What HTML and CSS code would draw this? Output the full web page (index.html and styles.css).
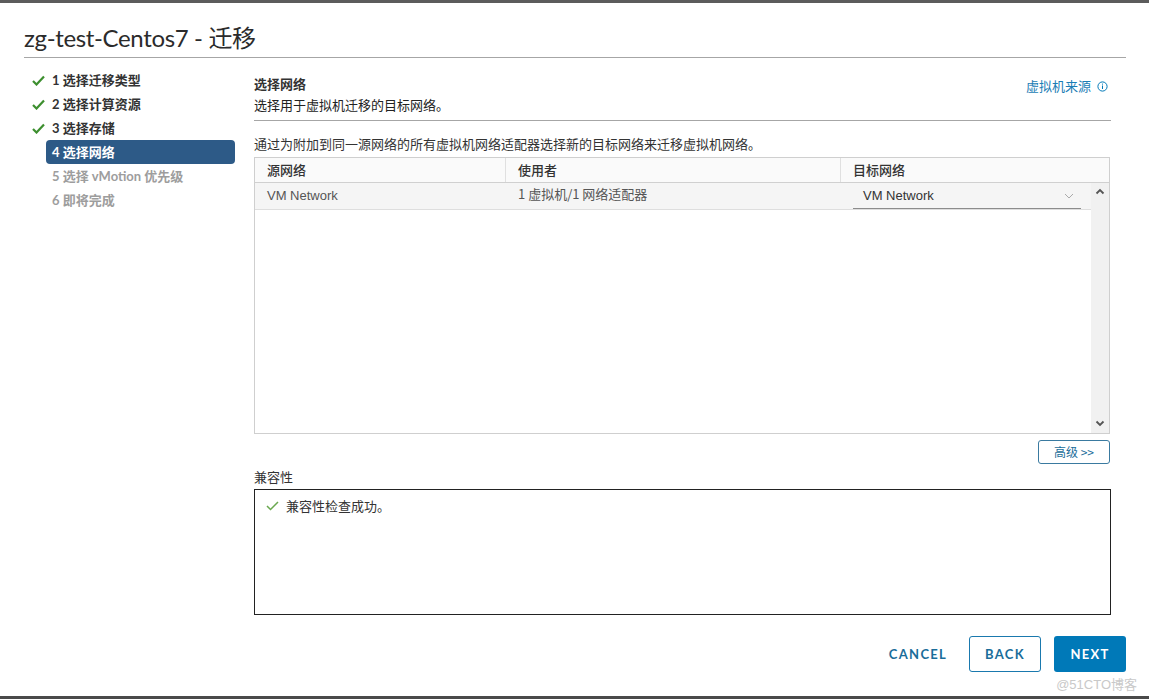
FILE: index.html
```html
<!DOCTYPE html>
<html lang="zh">
<head>
<meta charset="utf-8">
<link rel="stylesheet" href="styles.css">
</head>
<body>
<div class="dialog">
  <div class="topbar"></div>
  <div class="header">
    <h1 class="title">zg-test-Centos7 - 迁移</h1>
  </div>
  <div class="main">
    <nav class="steps">
      <div class="step done"><span class="chk"><svg width="13" height="11" viewBox="0 0 13 11"><path d="M1 6 L4.5 9.5 L12 1.5" fill="none" stroke="#3d8f2f" stroke-width="2.2"/></svg></span>1 选择迁移类型</div>
      <div class="step done"><span class="chk"><svg width="13" height="11" viewBox="0 0 13 11"><path d="M1 6 L4.5 9.5 L12 1.5" fill="none" stroke="#3d8f2f" stroke-width="2.2"/></svg></span>2 选择计算资源</div>
      <div class="step done"><span class="chk"><svg width="13" height="11" viewBox="0 0 13 11"><path d="M1 6 L4.5 9.5 L12 1.5" fill="none" stroke="#3d8f2f" stroke-width="2.2"/></svg></span>3 选择存储</div>
      <div class="step active">4 选择网络</div>
      <div class="step disabled">5 选择 vMotion 优先级</div>
      <div class="step disabled">6 即将完成</div>
    </nav>
    <section class="content">
      <div class="sec-head">
        <div class="sec-text">
          <div class="sec-title">选择网络</div>
          <div class="sec-sub">选择用于虚拟机迁移的目标网络。</div>
        </div>
        <a class="src-link">虚拟机来源 <svg class="info" width="11" height="11" viewBox="0 0 11 11"><circle cx="5.5" cy="5.5" r="4.6" fill="none" stroke="#0079b8" stroke-width="1"/><rect x="5" y="4.5" width="1" height="3.5" fill="#0079b8"/><rect x="5" y="2.6" width="1" height="1" fill="#0079b8"/></svg></a>
      </div>
      <p class="desc">通过为附加到同一源网络的所有虚拟机网络适配器选择新的目标网络来迁移虚拟机网络。</p>
      <div class="grid">
        <div class="grid-head">
          <div class="c c1">源网络</div>
          <div class="c c2">使用者</div>
          <div class="c c3">目标网络</div>
        </div>
        <div class="grid-body">
          <div class="rows">
            <div class="row">
              <div class="c c1">VM Network</div>
              <div class="c c2">1 虚拟机/1 网络适配器</div>
              <div class="c3s">
                <div class="select">VM Network<svg class="chev" width="10" height="6" viewBox="0 0 10 6"><path d="M1 1 L5 5 L9 1" fill="none" stroke="#aaa" stroke-width="1"/></svg></div>
              </div>
            </div>
          </div>
          <div class="scroll">
            <svg width="10" height="7" viewBox="0 0 10 7"><path d="M1.5 5.5 L5 2 L8.5 5.5" fill="none" stroke="#555" stroke-width="1.8"/></svg>
            <svg width="10" height="7" viewBox="0 0 10 7"><path d="M1.5 1.5 L5 5 L8.5 1.5" fill="none" stroke="#555" stroke-width="1.8"/></svg>
          </div>
        </div>
      </div>
      <div class="adv-wrap"><button class="adv">高级 &gt;&gt;</button></div>
      <div class="compat-label">兼容性</div>
      <div class="compat-box">
        <div class="compat-ok"><svg width="13" height="10" viewBox="0 0 13 10"><path d="M1 5 L4.5 8.5 L12 1" fill="none" stroke="#6aa84f" stroke-width="1.5"/></svg>兼容性检查成功。</div>
      </div>
    </section>
  </div>
  <div class="footer">
    <button class="btn flat">CANCEL</button>
    <button class="btn outline">BACK</button>
    <button class="btn primary">NEXT</button>
  </div>
  <div class="bottombar"></div>
  <div class="watermark">@51CTO博客</div>
</div>
</body>
</html>
```
FILE: styles.css
```css
* { box-sizing: border-box; }
html, body { margin: 0; padding: 0; }
body {
  width: 1149px;
  height: 699px;
  overflow: hidden;
  background: #fff;
  font-family: "Noto Sans CJK SC", "Liberation Sans", sans-serif;
  color: #333;
}
.dialog {
  position: relative;
  width: 1149px;
  height: 699px;
  display: flex;
  flex-direction: column;
}
.topbar { height: 3px; background: #5c5c5c; flex: none; }
.bottombar { height: 3px; background: #4a4a4a; flex: none; margin-top: auto; }
.header {
  margin: 0 23px 0 24px;
  height: 55px;
  border-bottom: 1px solid #a6a6a6;
  display: flex;
  align-items: flex-end;
}
.title {
  margin: 0 0 4px 0;
  font-family: "Lato", "Noto Sans CJK SC", sans-serif;
  font-weight: 400;
  font-size: 24px;
  line-height: 30px;
  color: #2b2b2b;
  letter-spacing: -0.35px;
}
.main {
  display: flex;
  margin-left: 24px;
  height: 556px;
}
.steps {
  width: 230px;
  padding: 10px 0 0 22px;
  flex: none;
}
.step {
  width: 189px;
  height: 24px;
  line-height: 24px;
  padding-left: 6px;
  font-family: "Lato", "Noto Sans CJK SC", sans-serif;
  font-weight: 700;
  font-size: 13px;
  color: #333;
  border-radius: 4px;
  display: flex;
  align-items: center;
}
.chk {
  flex: none;
  width: 14px;
  margin-left: -20px;
  margin-right: 6px;
  display: flex;
  align-items: center;
}
.step.active { background: #2d5a87; color: #fff; }
.step.disabled { color: #9d9d9d; }
.content {
  width: 857px;
  flex: none;
  padding-top: 15px;
}
.sec-head {
  display: flex;
  justify-content: space-between;
  align-items: flex-start;
  border-bottom: 1px solid #a6a6a6;
  height: 48px;
}
.sec-title { font-size: 13px; font-weight: 700; line-height: 21px; color: #333; }
.sec-sub { font-size: 13px; line-height: 21px; color: #222; }
.src-link {
  font-size: 13px;
  line-height: 20px;
  margin-top: 3px;
  margin-right: 3px;
  color: #1a7db5;
  display: flex;
  align-items: center;
  gap: 4px;
}
.info { margin-left: 2px; }
.desc {
  margin: 13px 0 3px 0;
  font-size: 13px;
  line-height: 20px;
  color: #333;
}
.grid {
  border: 1px solid #cfcfcf;
  width: 856px;
  height: 277px;
  display: flex;
  flex-direction: column;
}
.grid-head {
  display: flex;
  height: 25px;
  background: #fafafa;
  border-bottom: 1px solid #d0d0d0;
  font-size: 13px;
  font-weight: 500;
  line-height: 23px;
  color: #333;
}
.c { padding-left: 12px; }
.c1 { width: 250px; }
.c2 { width: 335px; }
.grid-head .c2, .grid-head .c3 { border-left: 1px solid #e0e0e0; }
.grid-head .c3 { flex: 1; }
.grid-body { flex: 1; display: flex; }
.rows { flex: 1; }
.row {
  display: flex;
  align-items: center;
  height: 27px;
  background: #f5f5f5;
  border-bottom: 1px solid #dedede;
  font-family: "Liberation Sans", "Noto Sans CJK SC", sans-serif;
  font-size: 13px;
  color: #565656;
}
.row .c1 { line-height: 24px; }
.row .c2 {
  font-family: "Noto Sans CJK SC", sans-serif;
  line-height: 20px;
  padding-left: 13px;
  margin-top: -4px;
}
.c3s { flex: 1; padding-left: 13px; padding-right: 10px; }
.select {
  width: 228px;
  height: 26px;
  border-bottom: 1px solid #8c8c8c;
  padding-left: 10px;
  color: #333;
  display: flex;
  align-items: center;
  justify-content: space-between;
  padding-right: 7px;
  line-height: 24px;
}
.scroll {
  width: 18px;
  background: #f1f1f1;
  display: flex;
  flex-direction: column;
  justify-content: space-between;
  align-items: center;
  padding: 5px 0 6px 0;
}
.adv-wrap { display: flex; justify-content: flex-end; margin-top: 6px; width: 856px; }
.adv {
  width: 72px;
  height: 24px;
  background: #fff;
  border: 1px solid #3a7aa0;
  border-radius: 3px;
  font-family: "Noto Sans CJK SC", sans-serif;
  font-size: 12px;
  color: #1a6d9a;
  padding: 0;
  line-height: 20px;
}
.compat-label {
  margin-top: 3px;
  font-size: 13px;
  line-height: 20px;
  color: #333;
}
.compat-box {
  margin-top: 2px;
  width: 857px;
  height: 126px;
  border: 1px solid #222;
  padding: 6px 0 0 11px;
}
.compat-ok {
  display: flex;
  align-items: center;
  gap: 7px;
  font-size: 13px;
  line-height: 20px;
  color: #333;
}
.footer {
  display: flex;
  justify-content: flex-end;
  align-items: center;
  margin: 22px 23px 0 0;
  gap: 13px;
}
.btn {
  height: 36px;
  border-radius: 3px;
  font-family: "Lato", sans-serif;
  font-weight: 700;
  font-size: 13px;
  letter-spacing: 1.3px;
  padding: 0;
  background: #fff;
}
.flat { border: none; color: #1a6d9a; width: 72px; margin-right: 2px; }
.outline { border: 1px solid #1a79ae; color: #1a6d9a; width: 72px; }
.primary { border: none; background: #0079b8; color: #fff; width: 72px; }
.watermark {
  position: absolute;
  right: 12px;
  bottom: 6px;
  font-family: "Liberation Sans", "Noto Sans CJK SC", sans-serif;
  font-size: 13px;
  color: #c9c9c9;
}
```
